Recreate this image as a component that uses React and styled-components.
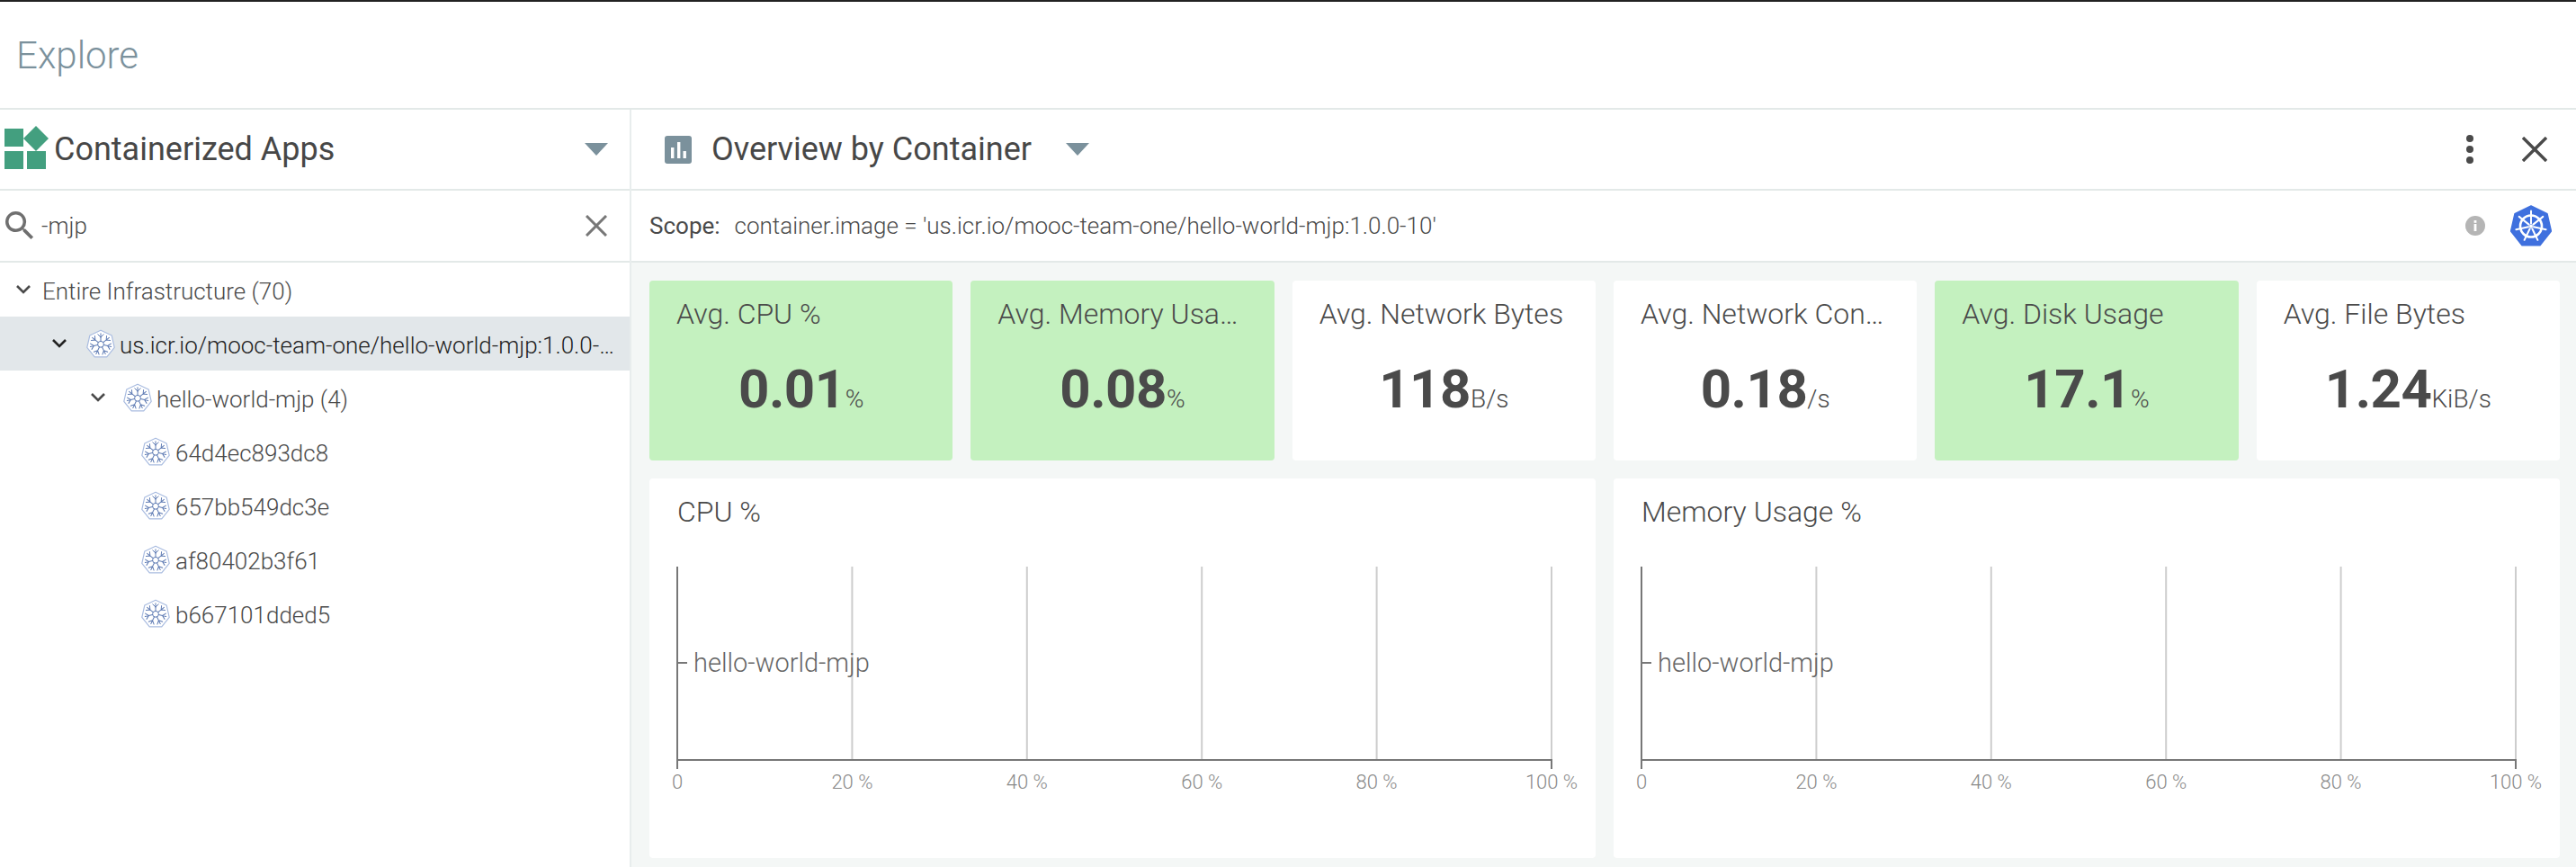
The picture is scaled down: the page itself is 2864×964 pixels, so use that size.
import React from "react";
import styled, { createGlobalStyle } from "styled-components";

const Global = createGlobalStyle`
  html, body { margin: 0; padding: 0; background: #fff; }
  body { font-family: Roboto, "Liberation Sans", sans-serif; color: #4a4a4a; }
  * { box-sizing: border-box; }
`;

const Page = styled.div`
  width: 2864px;
  height: 964px;
  overflow: hidden;
  border-top: 2px solid #222;
  display: flex;
  flex-direction: column;
`;
const Header = styled.header`
  height: 120px;
  flex: none;
  display: flex;
  align-items: center;
  padding: 0 0 0 18px;
  border-bottom: 2px solid #e3e9e8;
`;
const PageTitle = styled.h1`
  margin: 0;
  font-size: 42px;
  font-weight: 300;
  color: #7b919c;
`;
const Body = styled.div`
  flex: 1;
  min-height: 0;
  display: grid;
  grid-template-columns: 702px 1fr;
`;
const Left = styled.aside`
  border-right: 2px solid #e8eded;
  display: flex;
  flex-direction: column;
  min-width: 0;
`;
const Bar = styled.div`
  height: ${(p) => p.$h}px;
  flex: none;
  display: flex;
  align-items: center;
  border-bottom: 2px solid #e3e9e8;
  padding: ${(p) => p.$pad};
`;
const BarTitle = styled.div`
  font-size: 36px;
  font-weight: 400;
  color: #474747;
  margin-left: ${(p) => p.$ml || 0}px;
  white-space: nowrap;
`;
const Spacer = styled.div`
  flex: 1;
`;
const Gap = styled.span`
  width: ${(p) => p.$w}px;
  flex: none;
`;
const SearchText = styled.div`
  font-size: 26px;
  font-weight: 300;
  color: #4a4a4a;
  margin-left: 8px;
`;
const TreeRow = styled.div`
  height: 60px;
  flex: none;
  display: flex;
  align-items: center;
  padding: 0 ${(p) => (p.$selected ? 12 : 20)}px 0 ${(p) => p.$indent}px;
  background: ${(p) => (p.$selected ? "#e2e7ea" : "transparent")};
  min-width: 0;
`;
const TreeLabel = styled.span`
  font-size: 26px;
  font-weight: 300;
  padding-top: 3px;
  color: ${(p) => (p.$selected ? "#222" : "#4a4a4a")};
  margin-left: ${(p) => p.$ml}px;
  white-space: nowrap;
  overflow: hidden;
  text-overflow: ellipsis;
  min-width: 0;
`;
const Right = styled.main`
  display: flex;
  flex-direction: column;
  min-width: 0;
`;
const ScopeLabel = styled.span`
  font-size: 26px;
  font-weight: 400;
  color: #4a4a4a;
`;
const ScopeValue = styled.span`
  font-size: 26px;
  font-weight: 300;
  color: #4a4a4a;
  margin-left: 16px;
`;
const Content = styled.div`
  flex: 1;
  min-height: 0;
  background: #f4f7f6;
  padding: 20px 18px 10px 20px;
  display: flex;
  flex-direction: column;
  gap: 20px;
`;
const Tiles = styled.div`
  display: grid;
  grid-template-columns: repeat(6, 1fr);
  gap: 20px;
  height: 200px;
  flex: none;
`;
const Tile = styled.div`
  background: ${(p) => (p.$ok ? "#c4f1bf" : "#fff")};
  border-radius: 4px;
  padding: 18px 30px 0;
  min-width: 0;
  display: flex;
  flex-direction: column;
`;
const TileTitle = styled.div`
  font-size: 32px;
  font-weight: 300;
  line-height: 38px;
  color: #4a4a4a;
  white-space: nowrap;
  overflow: hidden;
  text-overflow: ellipsis;
`;
const TileValue = styled.div`
  margin-top: 30px;
  text-align: center;
  white-space: nowrap;
  font-size: 60px;
  line-height: 70px;
  font-weight: 700;
  letter-spacing: -0.5px;
  color: #4a4a4a;
`;
const TileUnit = styled.span`
  font-size: 28px;
  font-weight: 300;
  letter-spacing: 0;
`;
const Charts = styled.div`
  flex: 1;
  min-height: 0;
  display: grid;
  grid-template-columns: 1fr 1fr;
  gap: 20px;
`;
const ChartCard = styled.section`
  background: #fff;
  border-radius: 4px;
  padding: 18px 0 0 31px;
  display: flex;
  flex-direction: column;
  min-width: 0;
`;
const ChartTitle = styled.div`
  font-size: 32px;
  font-weight: 300;
  line-height: 38px;
  color: #4a4a4a;
`;
const ChartSvg = styled.svg`
  display: block;
  margin: 42px 0 0 -4px;
  overflow: visible;
`;
const Icon = styled.svg`
  display: block;
  flex: none;
`;

const pts = (cx, cy, r, n = 7) =>
  Array.from({ length: n }, (_, i) => {
    const a = (-90 + (360 / n) * i) * (Math.PI / 180);
    return [cx + r * Math.cos(a), cy + r * Math.sin(a)];
  });
const hept = (cx, cy, r) => pts(cx, cy, r).map((p) => p.map((v) => v.toFixed(2)).join(",")).join(" ");

function K8sOutline() {
  return (
    <Icon width="32" height="33" viewBox="0 0 32 33">
      <polygon points={hept(16, 16.8, 15.6)} fill="#fff" stroke="#a9bce0" strokeWidth="1.2" strokeLinejoin="round" />
      <circle cx="16" cy="16.8" r="3.4" fill="none" stroke="#5d7ab3" strokeWidth="1" />
      {Array.from({ length: 7 }, (_, i) => (
        <g key={i} transform={`rotate(${(360 / 7) * i} 16 16.8)`} stroke="#5d7ab3" strokeWidth="1" fill="none" strokeLinecap="round">
          <path d="M16 13.2V4.8M16 9l-3.2-3.2M16 9l3.2-3.2" />
        </g>
      ))}
    </Icon>
  );
}

function K8sFilled() {
  return (
    <Icon width="46" height="46" viewBox="0 0 46 46">
      <polygon points={hept(23, 24, 23)} fill="#3f70de" stroke="#3f70de" strokeWidth="1.5" strokeLinejoin="round" />
      <circle cx="23" cy="23.5" r="12" fill="none" stroke="#fff" strokeWidth="2.6" />
      <circle cx="23" cy="23.5" r="2" fill="#fff" />
      {Array.from({ length: 7 }, (_, i) => (
        <path key={i} transform={`rotate(${(360 / 7) * i} 23 23.5)`} d="M23 20.5V6.5" stroke="#fff" strokeWidth="2" strokeLinecap="round" />
      ))}
    </Icon>
  );
}

const Logo = () => (
  <Icon width="52" height="52" viewBox="0 0 52 52">
    <g fill="#439f7f">
      <rect x="0" y="3" width="21" height="20" />
      <polygon points="35,0 49,14 35,28 21,14" />
      <rect x="0" y="28" width="21" height="20" />
      <rect x="25" y="28" width="21" height="20" />
    </g>
  </Icon>
);

const Caret = () => (
  <Icon width="26" height="14" viewBox="0 0 26 14">
    <path d="M0 0h26L13 14z" fill="#7b919c" />
  </Icon>
);

const Chevron = ({ dark }) => (
  <Icon width="18" height="12" viewBox="0 0 18 12">
    <path d="M2 2l7 7 7-7" fill="none" stroke={dark ? "#222" : "#4a4a4a"} strokeWidth="2.6" />
  </Icon>
);

const ChartIcon = () => (
  <Icon width="30" height="31" viewBox="0 0 30 31">
    <rect width="30" height="31" rx="3" fill="#7b919c" />
    <rect x="7" y="13" width="3.4" height="12" fill="#fff" />
    <rect x="14" y="7" width="3.4" height="18" fill="#fff" />
    <rect x="20.5" y="17" width="3.4" height="8" fill="#fff" />
  </Icon>
);

const SearchIcon = () => (
  <Icon width="32" height="32" viewBox="3 3 18 18">
    <path
      fill="#6f6f6f"
      d="M15.5 14h-.79l-.28-.27A6.471 6.471 0 0 0 16 9.5 6.5 6.5 0 1 0 9.5 16c1.61 0 3.09-.59 4.23-1.57l.27.28v.79l5 4.99L20.49 19l-4.99-5zm-6 0C7.01 14 5 11.99 5 9.5S7.01 5 9.5 5 14 7.01 14 9.5 11.99 14 9.5 14z"
    />
  </Icon>
);

const Cross = ({ size, color, w }) => (
  <Icon width={size} height={size} viewBox={`0 0 ${size} ${size}`}>
    <path d={`M1 1L${size - 1} ${size - 1}M${size - 1} 1L1 ${size - 1}`} stroke={color} strokeWidth={w} fill="none" />
  </Icon>
);

const Dots = () => (
  <Icon width="8" height="32" viewBox="0 0 8 32">
    <circle cx="4" cy="4" r="4" fill="#4a4a4a" />
    <circle cx="4" cy="16" r="4" fill="#4a4a4a" />
    <circle cx="4" cy="28" r="4" fill="#4a4a4a" />
  </Icon>
);

const Info = () => (
  <Icon width="22" height="22" viewBox="0 0 22 22">
    <circle cx="11" cy="11" r="11" fill="#b5b5b5" />
    <rect x="9.6" y="9" width="2.8" height="8" fill="#fff" />
    <rect x="9.6" y="5" width="2.8" height="2.8" fill="#fff" />
  </Icon>
);

const AXIS = [0, 20, 40, 60, 80, 100];
function BarChart() {
  const x0 = 4;
  const step = 194.4;
  const top = 0;
  const base = 215;
  return (
    <ChartSvg width="1030" height="252" viewBox="0 0 1030 252" fontFamily="Roboto, sans-serif" fontWeight="300">
      {AXIS.slice(1).map((v, i) => (
        <line key={v} x1={x0 + step * (i + 1)} x2={x0 + step * (i + 1)} y1={top} y2={base} stroke="#cdcdcd" strokeWidth="2" />
      ))}
      <line x1={x0} x2={x0} y1={top} y2={base + 10} stroke="#777" strokeWidth="2" />
      <line x1={x0} x2={x0 + step * 5 + 1} y1={base} y2={base} stroke="#777" strokeWidth="2" />
      <line x1={x0 + step * 5} x2={x0 + step * 5} y1={base} y2={base + 10} stroke="#777" strokeWidth="2" />
      <line x1={x0} x2={x0 + 11} y1="107" y2="107" stroke="#777" strokeWidth="2" />
      <text x={x0 + 18} y="117" fontSize="29" fill="#666">hello-world-mjp</text>
      {AXIS.map((v, i) => (
        <text key={v} x={x0 + step * i} y="247" fontSize="22" fill="#8a8a8a" textAnchor="middle">
          {v === 0 ? "0" : `${v} %`}
        </text>
      ))}
    </ChartSvg>
  );
}

const TILES = [
  { t: "Avg. CPU %", v: "0.01", u: "%", ok: true },
  { t: "Avg. Memory Usage %", v: "0.08", u: "%", ok: true },
  { t: "Avg. Network Bytes", v: "118", u: "B/s" },
  { t: "Avg. Network Connections", v: "0.18", u: "/s" },
  { t: "Avg. Disk Usage", v: "17.1", u: "%", ok: true },
  { t: "Avg. File Bytes", v: "1.24", u: "KiB/s" },
];
const LEAVES = ["64d4ec893dc8", "657bb549dc3e", "af80402b3f61", "b667101dded5"];

export default function App() {
  return (
    <Page>
      <Global />
      <Header>
        <PageTitle>Explore</PageTitle>
      </Header>
      <Body>
        <Left>
          <Bar $h={90} $pad="0 24px 0 5px">
            <Logo />
            <BarTitle $ml={3}>Containerized Apps</BarTitle>
            <Spacer />
            <Caret />
          </Bar>
          <Bar $h={80} $pad="0 25px 0 6px">
            <SearchIcon />
            <SearchText>-mjp</SearchText>
            <Spacer />
            <Cross size={24} color="#777" w={3} />
          </Bar>
          <TreeRow $indent={17}>
            <Chevron />
            <TreeLabel $ml={12}>Entire Infrastructure (70)</TreeLabel>
          </TreeRow>
          <TreeRow $indent={57} $selected>
            <Chevron dark />
            <Gap $w={21} />
            <K8sOutline />
            <TreeLabel $ml={5} $selected>us.icr.io/mooc-team-one/hello-world-mjp:1.0.0-10</TreeLabel>
          </TreeRow>
          <TreeRow $indent={100}>
            <Chevron />
            <Gap $w={19} />
            <K8sOutline />
            <TreeLabel $ml={5}>hello-world-mjp (4)</TreeLabel>
          </TreeRow>
          {LEAVES.map((l) => (
            <TreeRow key={l} $indent={157}>
              <K8sOutline />
              <TreeLabel $ml={6}>{l}</TreeLabel>
            </TreeRow>
          ))}
        </Left>
        <Right>
          <Bar $h={90} $pad="0 32px 0 37px">
            <ChartIcon />
            <BarTitle $ml={22}>Overview by Container</BarTitle>
            <Gap $w={38} />
            <Caret />
            <Spacer />
            <Dots />
            <Gap $w={54} />
            <Cross size={28} color="#4a4a4a" w={3.4} />
          </Bar>
          <Bar $h={80} $pad="0 27px 0 20px">
            <ScopeLabel>Scope:</ScopeLabel>
            <ScopeValue>container.image = 'us.icr.io/mooc-team-one/hello-world-mjp:1.0.0-10'</ScopeValue>
            <Spacer />
            <Info />
            <Gap $w={28} />
            <K8sFilled />
          </Bar>
          <Content>
            <Tiles>
              {TILES.map((x) => (
                <Tile key={x.t} $ok={x.ok}>
                  <TileTitle>{x.t}</TileTitle>
                  <TileValue>
                    {x.v}
                    <TileUnit>{x.u}</TileUnit>
                  </TileValue>
                </Tile>
              ))}
            </Tiles>
            <Charts>
              <ChartCard>
                <ChartTitle>CPU %</ChartTitle>
                <BarChart />
              </ChartCard>
              <ChartCard>
                <ChartTitle>Memory Usage %</ChartTitle>
                <BarChart />
              </ChartCard>
            </Charts>
          </Content>
        </Right>
      </Body>
    </Page>
  );
}
